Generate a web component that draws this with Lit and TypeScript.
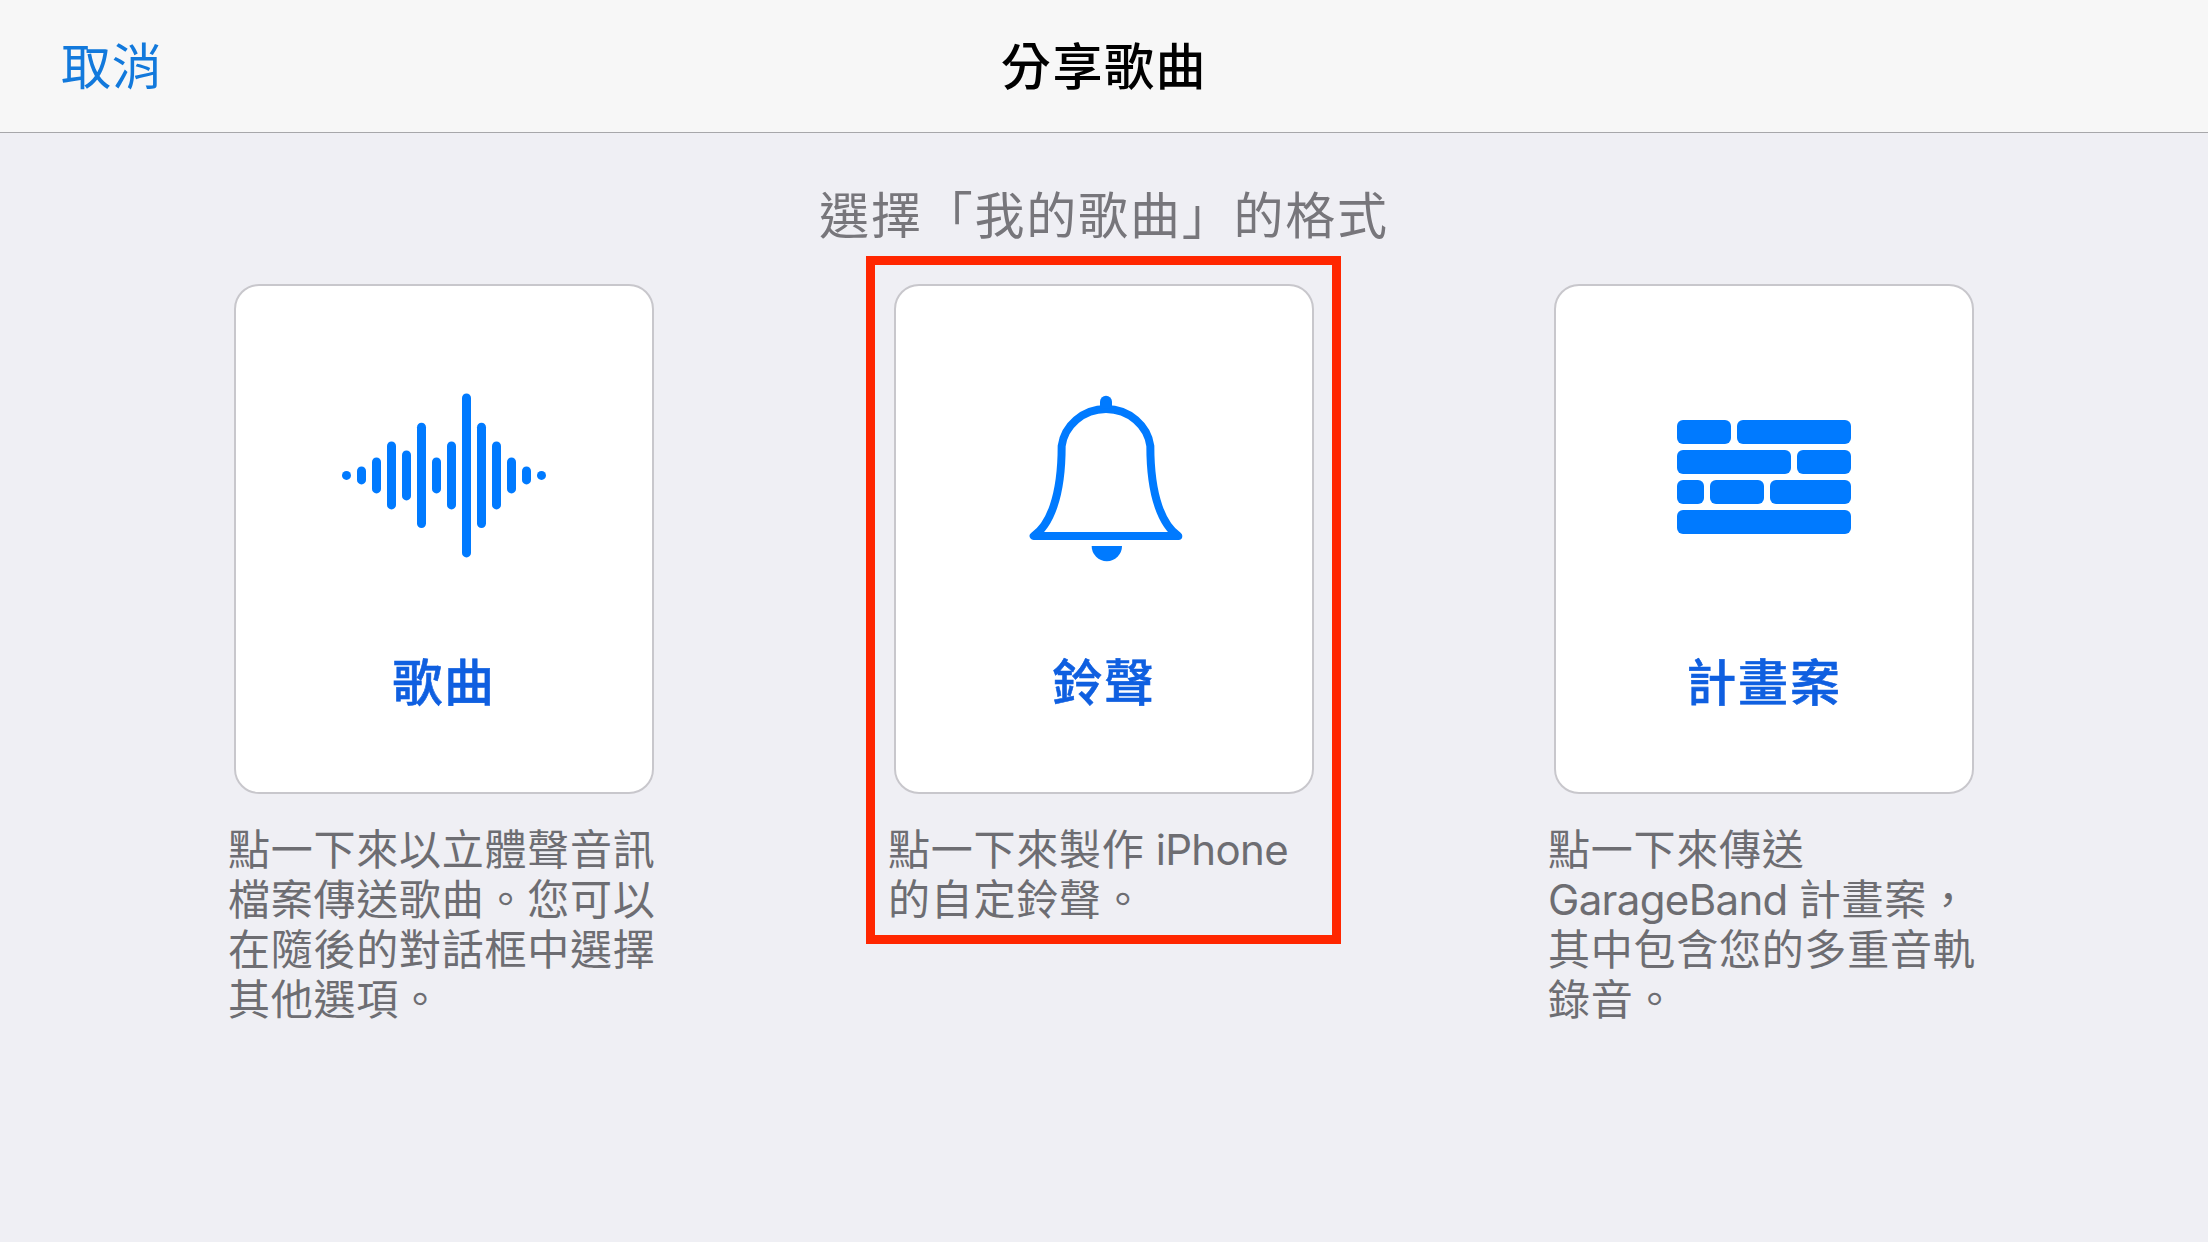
import { LitElement, html, css, svg } from "lit";
import { customElement, property } from "lit/decorators.js";

// bar heights of the waveform, left to right
const BARS = [9, 18, 36, 68, 50, 105.4, 36, 68, 164, 105.4, 68, 36, 18, 9];

// [x, y, width] of each brick
const BRICKS = [
  [0, 0, 54], [60, 0, 114],
  [0, 30, 114], [120, 30, 54],
  [0, 60, 27], [33, 60, 54], [93, 60, 81],
  [0, 90, 174],
];

const icons = {
  song: html`
    <svg viewBox="0 0 230 190" width="230" height="190" fill="currentColor">
      ${BARS.map((h, i) => svg`<rect x=${13 + i * 15} y=${95.4 - h / 2} width="9" height=${h} rx="4.5" />`)}
    </svg>
  `,
  ringtone: html`
    <svg viewBox="-63 0 690 570" width="230" height="190">
      <path
        d="M71 468H505C458 436 421 352 421 198C413 138 358 87 288 87C218 87 163 138 155 198C155 352 118 436 71 468Z"
        fill="none" stroke="currentColor" stroke-width="24" stroke-linejoin="round" />
      <path d="M270 85V65A18 18 0 0 1 306 65V85Z" fill="currentColor" />
      <path d="M245 498H336A45.500 45.500 0 0 1 245 498Z" fill="currentColor" />
    </svg>
  `,
  project: html`
    <svg viewBox="0 0 230 190" width="230" height="190" fill="currentColor">
      ${BRICKS.map(([x, y, w]) => svg`<rect x=${28 + x} y=${40 + y} width=${w} height="24" rx="6" />`)}
    </svg>
  `,
};

@customElement("format-option")
export class FormatOption extends LitElement {
  @property() icon = "song";
  @property() label = "";
  @property({ attribute: false }) lines: unknown[] = [];
  @property({ type: Boolean }) marked = false;

  static styles = css`
    :host {
      display: block;
      position: relative;
      width: 420px;
    }
    .card {
      box-sizing: border-box;
      display: flex;
      flex-direction: column;
      align-items: center;
      width: 420px;
      height: 510px;
      padding: 94px 0 0;
      border: 2px solid #c8c7cc;
      border-radius: 25px;
      background: #fff;
      color: #007aff;
      font: inherit;
    }
    svg {
      display: block;
    }
    .label {
      margin-top: 83px;
      font-size: 50px;
      line-height: 60px;
      font-weight: 500;
      letter-spacing: 1.8px;
      color: #0f5fe0;
      -webkit-text-stroke: 0.6px currentColor;
    }
    .text {
      margin: 31px -12px 0 -6px;
      font-size: 42px;
      line-height: 50px;
      letter-spacing: 0.75px;
      color: #6d6d72;
      white-space: nowrap;
    }
    .line {
      display: block;
      height: 50px;
    }
    .latin {
      letter-spacing: -0.65px;
    }
    .frame {
      position: absolute;
      box-sizing: border-box;
      left: -28px;
      top: -28px;
      width: 475px;
      height: 688px;
      border: 9px solid #ff2600;
      pointer-events: none;
    }
  `;

  render() {
    return html`
      <button class="card">
        ${icons[this.icon]}
        <span class="label">${this.label}</span>
      </button>
      <p class="text">${this.lines.map((line) => html`<span class="line">${line}</span>`)}</p>
      ${this.marked ? html`<div class="frame"></div>` : ""}
    `;
  }
}

@customElement("app-root")
export class AppRoot extends LitElement {
  static styles = css`
    :host {
      display: block;
      height: 1242px;
      overflow: hidden;
      background: #efeff4;
      font-family: Inter, "Noto Sans CJK TC", sans-serif;
    }
    .bar {
      box-sizing: border-box;
      display: grid;
      grid-template-columns: 1fr auto 1fr;
      align-items: center;
      height: 133px;
      padding: 2px 61px 0;
      border-bottom: 1px solid #a7a7aa;
      background: #f7f7f7;
      font-size: 50px;
      line-height: 60px;
    }
    .cancel {
      justify-self: start;
      padding: 0;
      border: 0;
      background: none;
      font: inherit;
      letter-spacing: 0.8px;
      color: #1279dc;
    }
    .title {
      margin: 0;
      font-size: 50px;
      font-weight: 500;
      letter-spacing: 1.6px;
      color: #000;
    }
    .heading {
      margin: 53px 0 38px;
      font-size: 50px;
      line-height: 60px;
      font-weight: 400;
      letter-spacing: 1.8px;
      text-align: center;
      color: #77767b;
    }
    .options {
      display: flex;
      justify-content: center;
      gap: 240px;
    }
  `;

  render() {
    return html`
      <header class="bar">
        <button class="cancel">取消</button>
        <h1 class="title">分享歌曲</h1>
      </header>
      <h2 class="heading">選擇「我的歌曲」的格式</h2>
      <main class="options">
        <format-option
          icon="song"
          label="歌曲"
          .lines=${["點一下來以立體聲音訊", "檔案傳送歌曲。您可以", "在隨後的對話框中選擇", "其他選項。"]}
        ></format-option>
        <format-option
          icon="ringtone"
          label="鈴聲"
          marked
          .lines=${[html`點一下來製作<span class="latin"> iPhone</span>`, "的自定鈴聲。"]}
        ></format-option>
        <format-option
          icon="project"
          label="計畫案"
          .lines=${[
            "點一下來傳送",
            html`<span class="latin">GarageBand </span>計畫案，`,
            "其中包含您的多重音軌",
            "錄音。",
          ]}
        ></format-option>
      </main>
    `;
  }
}
